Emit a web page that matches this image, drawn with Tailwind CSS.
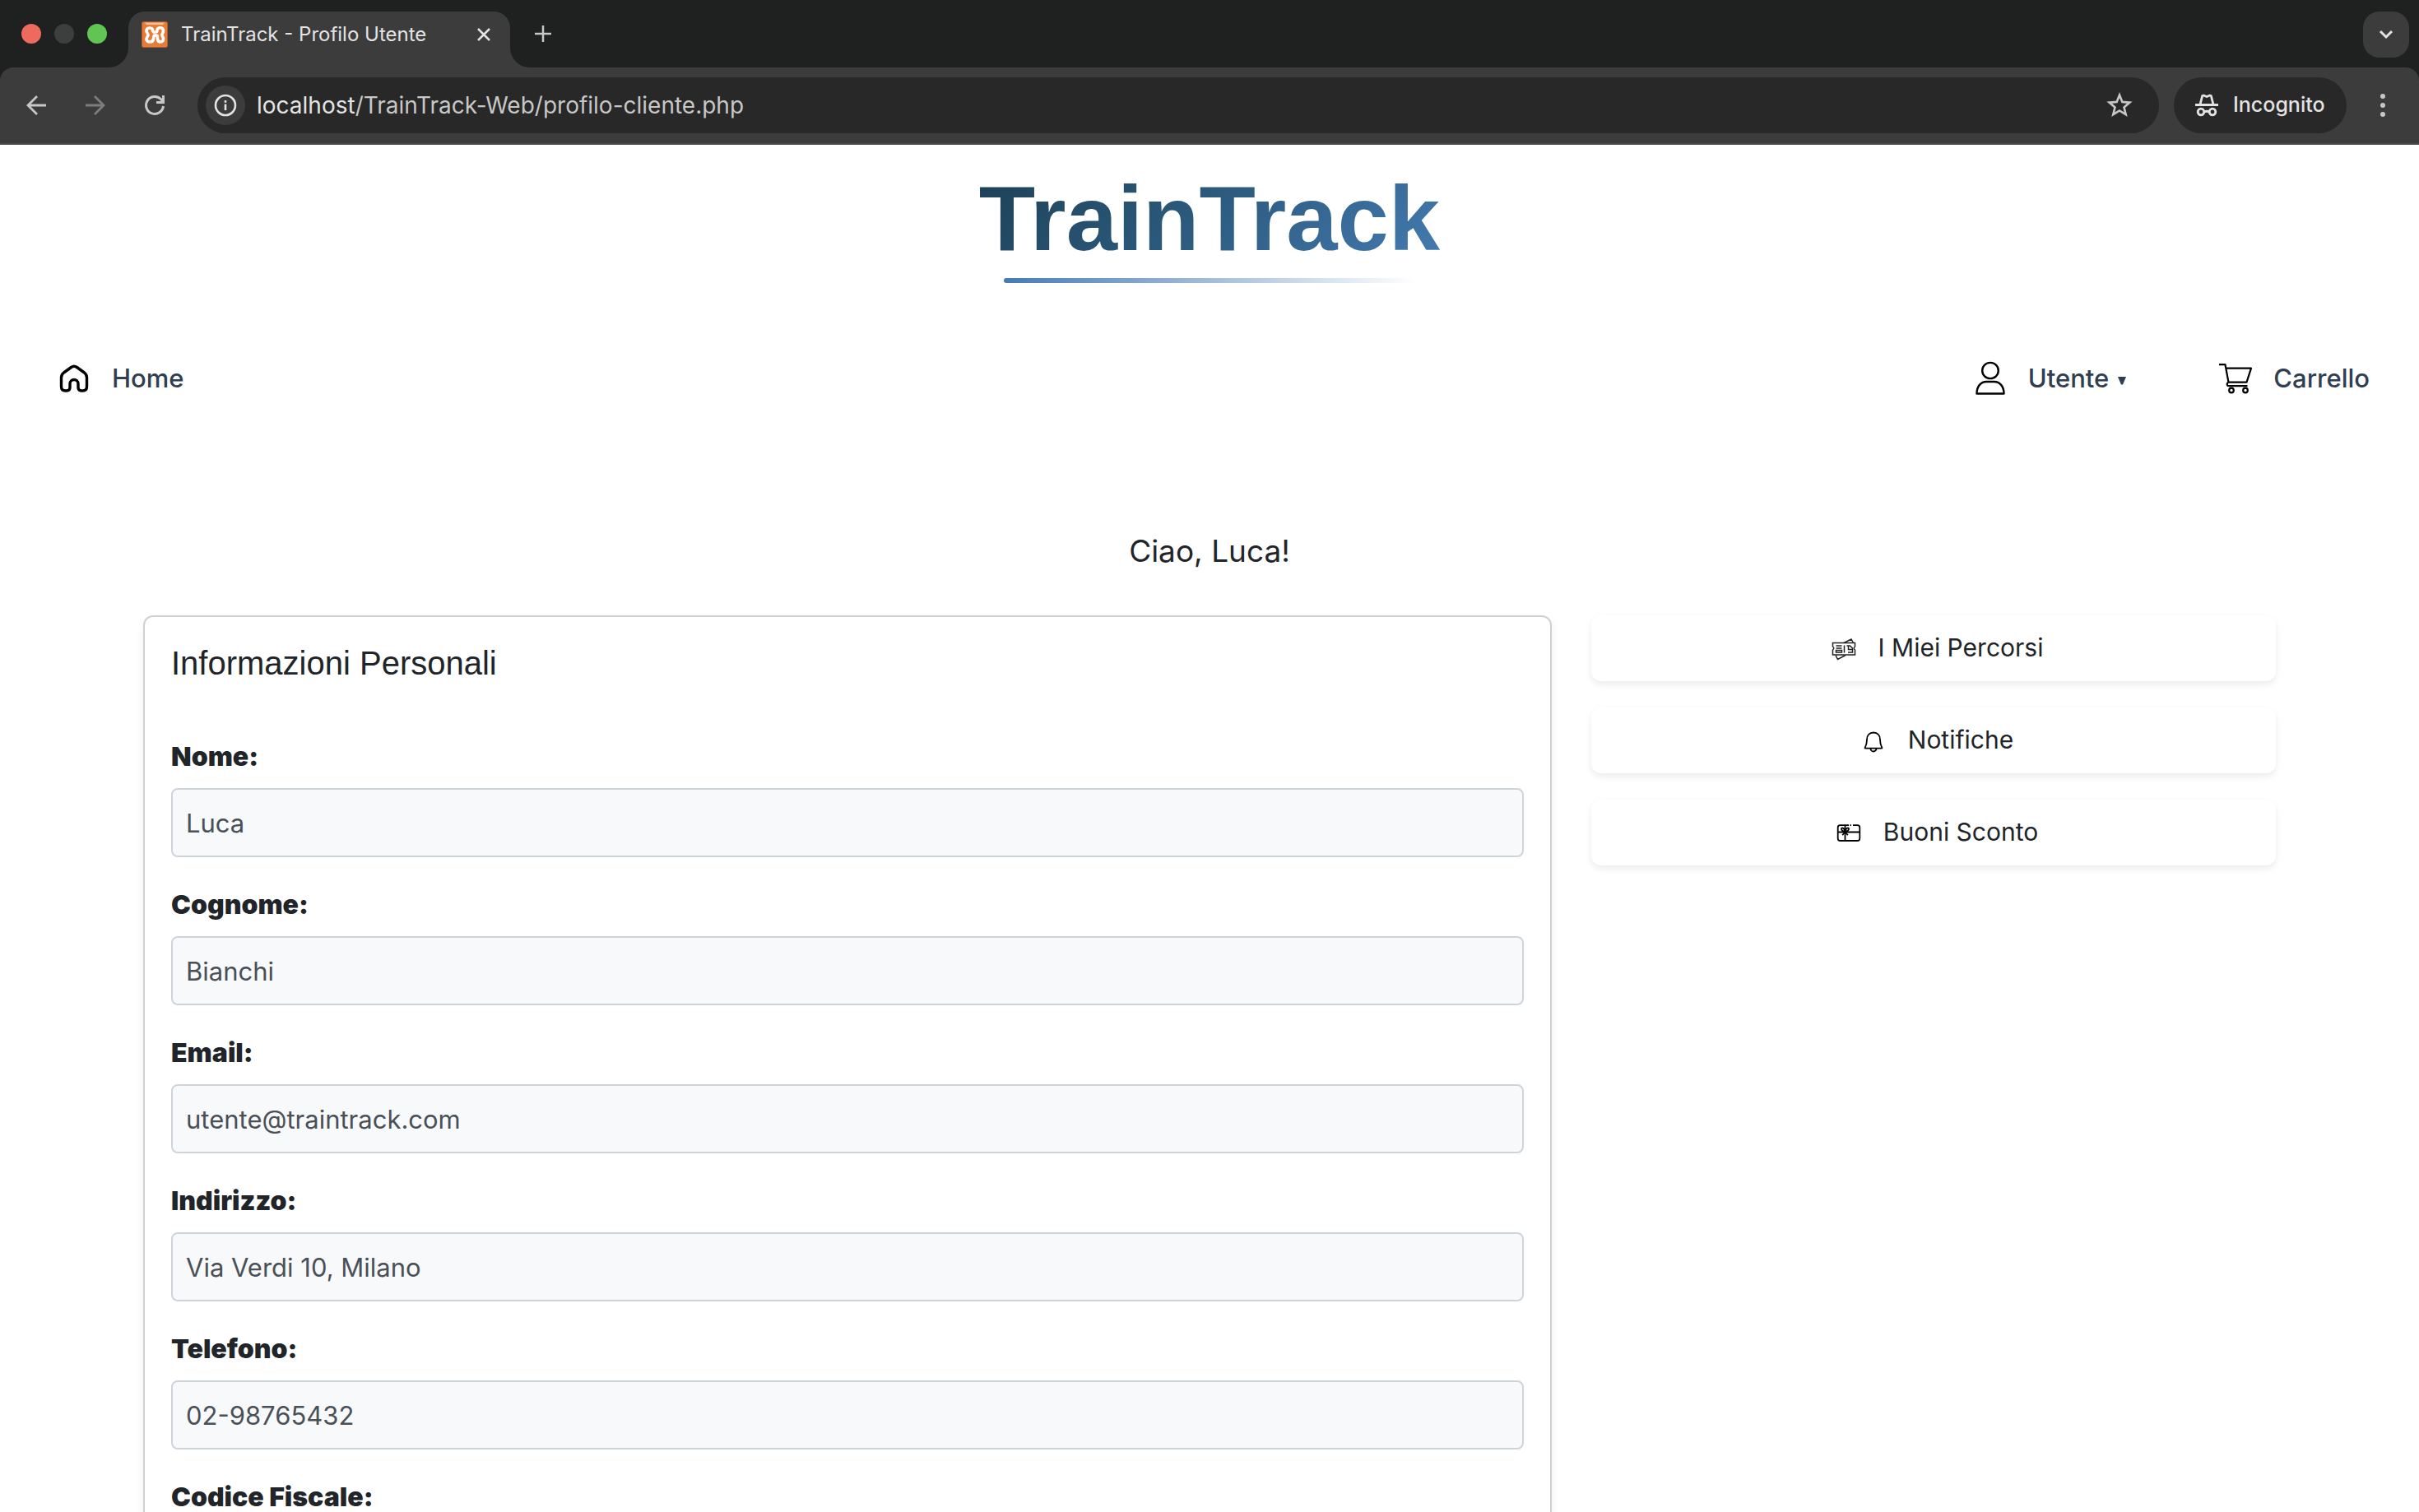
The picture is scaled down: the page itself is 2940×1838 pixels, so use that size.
<!DOCTYPE html>
<html lang="it">
<head>
<meta charset="utf-8">
<meta name="viewport" content="width=device-width, initial-scale=1">
<title>TrainTrack - Profilo Utente</title>
<script src="https://cdn.jsdelivr.net/npm/@tailwindcss/browser@4"></script>
</head>
<body class="flex h-screen flex-col overflow-hidden bg-white font-['Inter','Liberation_Sans',sans-serif] text-[#212529]">

<!-- Browser window -->
<header class="shrink-0 bg-[#1f2120] text-[#e3e3e3]">
  <div class="flex h-[82px] items-end">
    <div class="flex h-[82px] w-[156px] shrink-0 items-center gap-4 pl-[26px]">
      <span class="size-6 rounded-full bg-[#ed6a5e]"></span>
      <span class="size-6 rounded-full bg-[#3d3f3f]"></span>
      <span class="size-6 rounded-full bg-[#61c554]"></span>
    </div>
    <div class="relative flex h-[68px] w-[464px] items-center rounded-t-[20px] bg-[#3c3c3c] px-4 pb-3">
      <svg class="absolute bottom-0 -left-6 size-6" viewBox="0 0 24 24" fill="#3c3c3c"><path d="M24 0v24H0A24 24 0 0 0 24 0z"/></svg>
      <svg class="absolute -right-6 bottom-0 size-6" viewBox="0 0 24 24" fill="#3c3c3c"><path d="M0 0v24h24A24 24 0 0 1 0 0z"/></svg>
      <svg class="size-8 shrink-0" viewBox="0 0 32 32" fill="none">
        <rect x=".5" y=".5" width="31" height="31" rx="2" fill="#e87b35" stroke="#a9602f"/>
        <path d="M4 1.500h24l-2 2.500H6z" fill="#f3bd97"/>
        <path d="M13.500 11.500C14.500 7 6 6.500 6 11.500c0 2.500 2 3 2 5s-2 2.500-2 5c0 4.500 8 4.500 8.500 0 .3-3 0-4.500 1.500-4.500h2.500c1.500 0 .5 1.500 1 4.500.5 4.500 7 4.500 7 0 0-2.500-1.500-3-1.500-5s1.500-2.500 1.500-5c0-5-7.500-4.500-7.500-1 0 2-.5 2.500-2 2.500h-2.500" stroke="#fff" stroke-width="3.600" stroke-linejoin="round" stroke-linecap="round"/>
      </svg>
      <span class="ml-4 flex-1 truncate text-2xl">TrainTrack - Profilo Utente</span>
      <button class="grid size-8 place-items-center" aria-label="Chiudi scheda">
        <svg class="size-4" viewBox="0 0 16 16" fill="none" stroke="#e3e3e3" stroke-width="2.500"><path d="M1 1l14 14M15 1L1 15"/></svg>
      </button>
    </div>
    <button class="mb-[21px] ml-5 grid size-10 place-items-center" aria-label="Nuova scheda">
      <svg class="size-5" viewBox="0 0 20 20" fill="none" stroke="#c7c7c7" stroke-width="2.500"><path d="M10 0v20M0 10h20"/></svg>
    </button>
    <button class="mr-3 mb-3 ml-auto grid size-14 place-items-center rounded-[20px] bg-[#3c3c3c]" aria-label="Cerca schede">
      <svg class="size-5" viewBox="0 0 20 20" fill="none" stroke="#e3e3e3" stroke-width="3"><path d="M3 6l7 7 7-7"/></svg>
    </button>
  </div>
  <div class="flex h-[94px] items-center rounded-t-2xl border-b-2 border-[#4b4a4b] bg-[#3c3c3c] px-3">
    <div class="flex gap-2">
      <button class="grid h-16 w-16 place-items-center" aria-label="Indietro">
        <svg class="size-6" viewBox="0 0 24 24" fill="none" stroke="#c7c7c7" stroke-width="2.800"><path d="M24 12H2M13 1L2 12l11 11"/></svg>
      </button>
      <button class="grid h-16 w-16 place-items-center" aria-label="Avanti">
        <svg class="size-6" viewBox="0 0 24 24" fill="none" stroke="#7d7d7d" stroke-width="2.800"><path d="M0 12h22M11 1l11 11-11 11"/></svg>
      </button>
      <button class="grid h-16 w-16 place-items-center" aria-label="Ricarica">
        <svg class="size-6" viewBox="0 0 24 24" fill="none" stroke="#c7c7c7" stroke-width="3"><path d="M22.500 13a10.500 10.500 0 1 1-3-8.500l3 3.500M22.500 0v8.500H14"/></svg>
      </button>
    </div>
    <div class="ml-5 flex h-[68px] flex-1 items-center rounded-full bg-[#282828] pr-7 pl-[10px]">
      <button class="grid size-12 place-items-center rounded-full bg-[#3c3c3c]" aria-label="Informazioni sul sito">
        <svg class="size-7" viewBox="0 0 28 28" fill="none" stroke="#e3e3e3" stroke-width="2.600"><circle cx="14" cy="14" r="12"/><path d="M14 12.500V20M14 8v2.800"/></svg>
      </button>
      <div class="ml-[14px] flex-1 text-[28px] leading-9 text-[#c7c7c7]" role="textbox" aria-label="Indirizzo" contenteditable="true" spellcheck="false"><span class="text-[#e3e3e3]">localhost</span>/TrainTrack-Web/profilo-cliente.php</div>
      <button class="grid size-10 place-items-center" aria-label="Aggiungi ai preferiti">
        <svg class="size-8" viewBox="0 0 32 32" fill="none" stroke="#c7c7c7" stroke-width="2.600"><path d="M16 3.500l3.400 8.400 9 .7-6.900 5.800 2.200 8.800L16 22.500l-7.700 4.700 2.200-8.800-6.900-5.800 9-.7z"/></svg>
      </button>
    </div>
    <button class="ml-[18px] flex h-[68px] w-[210px] items-center gap-4 rounded-full bg-[#282828] pl-6 text-[25px] font-medium">
      <svg class="size-8" viewBox="0 0 32 32" fill="none" stroke="#e3e3e3" stroke-width="2.800">
        <path d="M2 15.500h28M8 15l2.700-10.500 1.500-.5 3.800 1.500L19.800 4l1.500.5L24 15M13 24q3-1.500 6 0"/><circle cx="9" cy="24" r="3.800"/><circle cx="23" cy="24" r="3.800"/>
      </svg>
      Incognito
    </button>
    <button class="ml-3 grid size-16 place-items-center" aria-label="Menu">
      <svg class="h-7 w-2" viewBox="0 0 8 28" fill="#c7c7c7"><circle cx="4" cy="3" r="3"/><circle cx="4" cy="14" r="3"/><circle cx="4" cy="25" r="3"/></svg>
    </button>
  </div>
</header>

<!-- Page -->
<div class="flex-1 overflow-hidden">
  <div class="flex flex-col items-center pt-[22px]">
    <h1 class="bg-linear-135 from-[#1c4054] via-[#2d5c80] to-[#457cb3] bg-clip-text font-['Liberation_Sans',sans-serif] text-[112px] leading-[136px] font-bold text-transparent">TrainTrack</h1>
    <div class="mt-1 h-[6px] w-[500px] rounded-[3px] bg-linear-to-r from-[#457bb2] to-transparent"></div>
  </div>

  <nav class="mt-[76px] flex h-20 items-center justify-between pr-[60px] pl-[66px] text-[31px] font-medium text-[#2f3e50]">
    <a href="#" class="flex items-center gap-[22px]">
      <svg class="size-12" viewBox="0 0 48 48" fill="none" stroke="#000" stroke-width="3.400" stroke-linejoin="round"><path d="M20.500 10.500L11.500 17q-3 2.300-3 6v11q0 5 5 5h1.500q4 0 4-4v-4.500a5 5 0 0 1 10 0V35q0 4 4 4h1.500q5 0 5-5V23q0-3.700-3-6l-9-6.500q-3.500-2.400-7 0z"/></svg>
      Home
    </a>
    <div class="flex items-center gap-[108px]">
      <button class="flex items-center">
        <svg class="mr-[22px] size-12" viewBox="0 0 48 48" fill="none" stroke="#000" stroke-width="2.400"><ellipse cx="24" cy="14.500" rx="9.800" ry="9.600"/><path d="M7.500 42.500c0-9 5-14.500 12-14.500h9c7 0 12 5.500 12 14.500z" stroke-linejoin="round"/></svg>
        Utente
        <svg class="mt-[6px] ml-[10px] h-[10px] w-3" viewBox="0 0 12 10" fill="#2f3e50"><path d="M1 0h10L7 9.500H5z"/></svg>
      </button>
      <a href="#" class="flex items-center gap-[22px]">
        <svg class="size-12" viewBox="0 0 48 48" fill="none" stroke="#000" stroke-width="2.200" stroke-linejoin="round"><path d="M4 7.200h7.500l4 21.500h22l5.500-17H12.500M15.500 28.700q-2.500 1-1.500 3.500.5 1 2 1h22.500"/><circle cx="19" cy="38.500" r="2.800"/><circle cx="36" cy="38.500" r="2.800"/></svg>
        Carrello
      </a>
    </div>
  </nav>

  <main class="mx-auto mt-[146px] max-w-[2640px] px-6">
    <h2 class="text-center text-[37px] leading-12">Ciao, Luca!</h2>
    <div class="mt-[54px] grid grid-cols-12 items-start gap-12">
      <section class="col-span-8 rounded-xl border-2 border-[#d0d0d0] p-8 shadow-[0_4px_12px_rgba(0,0,0,0.06)]">
        <h3 class="font-['Liberation_Sans',sans-serif] text-[40px] leading-12">Informazioni Personali</h3>
        <form class="mt-16 flex flex-col gap-8">
          <div class="flex flex-col gap-3">
            <label for="nome" class="text-[32px] leading-[52px] font-black">Nome:</label>
            <input id="nome" readonly value="Luca" class="h-[84px] rounded-lg border-2 border-[#ced4da] bg-[#f8f9fb] px-4 text-[31px] text-[#495057]">
          </div>
          <div class="flex flex-col gap-3">
            <label for="cognome" class="text-[32px] leading-[52px] font-black">Cognome:</label>
            <input id="cognome" readonly value="Bianchi" class="h-[84px] rounded-lg border-2 border-[#ced4da] bg-[#f8f9fb] px-4 text-[31px] text-[#495057]">
          </div>
          <div class="flex flex-col gap-3">
            <label for="email" class="text-[32px] leading-[52px] font-black">Email:</label>
            <input id="email" type="email" readonly value="utente@traintrack.com" class="h-[84px] rounded-lg border-2 border-[#ced4da] bg-[#f8f9fb] px-4 text-[31px] text-[#495057]">
          </div>
          <div class="flex flex-col gap-3">
            <label for="indirizzo" class="text-[32px] leading-[52px] font-black">Indirizzo:</label>
            <input id="indirizzo" readonly value="Via Verdi 10, Milano" class="h-[84px] rounded-lg border-2 border-[#ced4da] bg-[#f8f9fb] px-4 text-[31px] text-[#495057]">
          </div>
          <div class="flex flex-col gap-3">
            <label for="telefono" class="text-[32px] leading-[52px] font-black">Telefono:</label>
            <input id="telefono" type="tel" readonly value="02-98765432" class="h-[84px] rounded-lg border-2 border-[#ced4da] bg-[#f8f9fb] px-4 text-[31px] text-[#495057]">
          </div>
          <div class="flex flex-col gap-3">
            <label for="cf" class="text-[32px] leading-[52px] font-black">Codice Fiscale:</label>
            <input id="cf" readonly class="h-[84px] rounded-lg border-2 border-[#ced4da] bg-[#f8f9fb] px-4 text-[31px] text-[#495057]">
          </div>
        </form>
      </section>

      <aside class="col-span-4 flex flex-col gap-8">
        <a href="#" class="flex h-20 items-center justify-center gap-[18px] rounded-xl bg-white pb-[2px] text-[30px] shadow-[0_4px_8px_rgba(0,0,0,0.08)]">
          <svg class="size-12" viewBox="0 0 48 48" fill="none" stroke="#222" stroke-width="1.500">
            <path d="M10.500 18.500h27v4.500q-2.500 2 0 4v6h-27v-6q2.500-2 0-4z"/>
            <path d="M24 18.500l9-4.500 2.500 4.500M14 33.500l2.500 5L26 33.500M14.500 22h7M14.500 25h7M14.500 27.500h7v2.500h-7zM24.500 21.500v9M27.500 22h4l3 3v5h-5.500M29.500 22v4.500h5"/>
          </svg>
          I Miei Percorsi
        </a>
        <a href="#" class="flex h-20 items-center justify-center gap-[18px] rounded-xl bg-white pb-[2px] text-[30px] shadow-[0_4px_8px_rgba(0,0,0,0.08)]">
          <svg class="size-12" viewBox="0 0 48 48" fill="none" stroke="#000" stroke-width="1.800" stroke-linejoin="round"><path d="M24 15.500c-5 0-8 3.500-8 8.500 0 5.500-1.200 7.500-2.200 9.500-.4.800 0 1.200.6 1.200h19.200c.6 0 1-.4.600-1.200-1-2-2.200-4-2.200-9.500 0-5-3-8.500-8-8.500zM20.500 35a3.500 3.500 0 0 0 7 0"/></svg>
          Notifiche
        </a>
        <a href="#" class="flex h-20 items-center justify-center gap-[18px] rounded-xl bg-white pb-[2px] text-[30px] shadow-[0_4px_8px_rgba(0,0,0,0.08)]">
          <svg class="size-12" viewBox="0 0 48 48" fill="none" stroke="#000" stroke-width="1.800">
            <path d="M24 16.200H13.500a2.800 2.800 0 0 0-2.800 2.800v13.200a2.800 2.800 0 0 0 2.800 2.800h21a2.800 2.800 0 0 0 2.800-2.800V19a2.800 2.800 0 0 0-2.800-2.800H29M25.500 16.200h1.500M10.700 24.500h26.600M19.500 16.200V35"/>
            <path d="M19.500 24.200c-3-1-4.500-2-4.500-3.500 0-2 3.500-2 4.500 3.500 1-5.500 4.500-5.500 4.500-3.500 0 1.500-1.500 2.500-4.500 3.500l-3.300 4M19.500 24.200l3.300 4" stroke-width="1.800"/>
          </svg>
          Buoni Sconto
        </a>
      </aside>
    </div>
  </main>
</div>
</body>
</html>
